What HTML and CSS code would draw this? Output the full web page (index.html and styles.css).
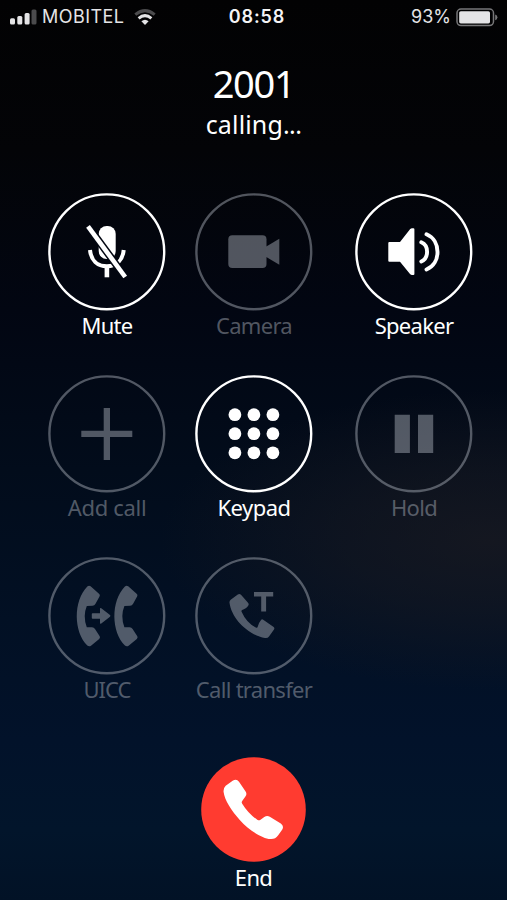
FILE: index.html
```html
<!DOCTYPE html>
<html lang="en">
<head>
<meta charset="utf-8">
<title>Call</title>
<link rel="stylesheet" href="styles.css">
</head>
<body>
<div class="phone">
  <header class="status">
    <div class="status-left">
      <svg class="signal" width="27" height="16" viewBox="0 0 27 16"><rect x="0" y="9.3" width="5" height="6.2" rx="1.5"/><rect x="7.3" y="7" width="5" height="8.5" rx="1.5"/><rect x="14.6" y="4" width="5" height="11.5" rx="1.5"/><rect class="weak" x="21.5" y="0.5" width="5" height="15" rx="1.5"/></svg>
      <span class="carrier">MOBITEL</span>
      <svg class="wifi" width="22" height="17" viewBox="0 0 22 17"><path class="weak-line" d="M1.3 5.6Q11-2.4 20.7 5.6"/><path class="line" d="M4.6 9.3Q11 4 17.4 9.3"/><path d="M7.4 12.2Q11 9.2 14.6 12.2L11 16Z"/></svg>
    </div>
    <span class="time">08:58</span>
    <div class="status-right">
      <span class="percent">93%</span>
      <svg width="42" height="19" viewBox="0 0 42 19"><rect class="shell" x="1" y="1" width="36.5" height="16.6" rx="4"/><rect x="3.2" y="3.2" width="30.8" height="12.2" rx="1.6"/><path class="tip" d="M39.2 6.5Q41.4 7 41.4 9.3T39.2 12.2Z"/></svg>
    </div>
  </header>
  <section class="caller">
    <h1 class="number">2001</h1>
    <p class="state">calling<span class="dots">...</span></p>
  </section>
  <main class="controls">
    <button class="control">
      <svg viewBox="0 0 118 118"><circle class="ring" cx="58.8" cy="58.8" r="57.4"/><rect x="50.7" y="33" width="17" height="33" rx="8"/><path class="mic-arc" d="M42 57C43 67.5 49.5 73.3 58.9 73.3S74.7 67.5 75.7 57"/><path d="M56.6 73h4.6v11.3h-4.6z"/><path class="slash-gap" d="M40.3 33.7L77 83.7"/><path class="slash" d="M40 33.3L77.2 84"/></svg>
      <span class="label mute">Mute</span>
    </button>
    <button class="control off">
      <svg viewBox="0 0 118 118"><circle class="ring" cx="58.8" cy="58.8" r="57.4"/><rect x="33.3" y="42.3" width="38.2" height="32.8" rx="4"/><path d="M71.3 53.5L84.3 45.7V71.8L71.3 64Z"/></svg>
      <span class="label camera">Camera</span>
    </button>
    <button class="control">
      <svg viewBox="0 0 118 118"><circle class="ring" cx="58.8" cy="58.8" r="57.4"/><path d="M34.3 49H45L55 36.2Q56 35.2 57 35.2H58.4Q59.4 35.2 59.4 36.3V81Q59.4 82 58.4 82H57Q56 82 55 81L45 68.8H34.3Q33.3 68.8 33.3 67.8V50Q33.3 49 34.3 49Z"/><path class="wave" d="M66.3 49.3C74 52.5 74 65 66.3 68.5M71.5 41.3C86.2 47.5 86.2 70.4 71.5 76.5"/></svg>
      <span class="label speaker">Speaker</span>
    </button>
    <button class="control off">
      <svg viewBox="0 0 118 118"><circle class="ring" cx="58.8" cy="58.8" r="57.4"/><path d="M55.7 33H62V55.7H84.3V62H62V85H55.7V62H33.3V55.7H55.7Z"/></svg>
      <span class="label add">Add call</span>
    </button>
    <button class="control">
      <svg viewBox="0 0 118 118"><circle class="ring" cx="58.8" cy="58.8" r="57.4"/><circle cx="39.9" cy="39.7" r="6.4"/><circle cx="58.9" cy="39.7" r="6.4"/><circle cx="77.9" cy="39.7" r="6.4"/><circle cx="39.9" cy="58.7" r="6.4"/><circle cx="58.9" cy="58.7" r="6.4"/><circle cx="77.9" cy="58.7" r="6.4"/><circle cx="39.9" cy="77.8" r="6.4"/><circle cx="58.9" cy="77.8" r="6.4"/><circle cx="77.9" cy="77.8" r="6.4"/></svg>
      <span class="label keypad">Keypad</span>
    </button>
    <button class="control off">
      <svg viewBox="0 0 118 118"><circle class="ring" cx="58.8" cy="58.8" r="57.4"/><path d="M39.7 39.7h15.2V78H39.7zM63 39.7h15.2V78H63z"/></svg>
      <span class="label hold">Hold</span>
    </button>
    <button class="control off">
      <svg viewBox="0 0 118 118"><circle class="ring" cx="58.8" cy="58.8" r="57.4"/><path id="receiver" d="M39.3 29.5Q41 28.2 42.6 29.3L51 36.8Q52.5 38 51.5 39.5L47.5 46.8Q46.5 48.6 44.5 48.7L38.8 49Q34.6 59 38.8 70.3L44 70.2Q46 70.2 47 72L51.7 79.3Q52.5 80.7 51.2 81.9L43 88.8Q41 90 39.3 88.5C25.6 75 25 44 39.3 29.5Z"/><use href="#receiver" x="37.6"/><path d="M44.6 56.3H52V51.8Q52 50.3 53.3 51.3L62 58Q62.9 58.9 62 59.7L53.3 66.4Q52 67.4 52 66V61.7H44.6Q43.8 61.7 43.8 60.9V57.1Q43.8 56.3 44.6 56.3Z"/></svg>
      <span class="label uicc">UICC</span>
    </button>
    <button class="control off">
      <svg viewBox="0 0 118 118"><circle class="ring" cx="58.8" cy="58.8" r="57.4"/><path d="M59 35H78.2V39.4H71.1V54.4H66.2V39.4H59Z"/><path d="M36 42.4L42.8 37.5Q44.5 36.2 46 37.8L53 45.7Q54.2 47 53.3 48.6Q52 51.3 47.2 53.1Q46 53.6 46.6 54.8Q51.5 66 60.8 70.5Q62.4 71.3 62.8 69.5Q63.4 66.3 66.2 62.8Q67 61.9 68.2 62.7L78.3 69.8Q80 71 79 72.5L74 79.5Q72.6 81.5 70 81C53 77.8 36.7 62 34.5 45.8Q34.2 43.7 36 42.4Z"/></svg>
      <span class="label transfer">Call transfer</span>
    </button>
  </main>
  <footer class="hangup">
    <svg class="hangup-icon" viewBox="0 0 105 105"><circle class="red" cx="52.5" cy="52.5" r="52.3"/><path d="M24.7 28.7L32 23.6Q35.6 21.4 38 24.8L44.6 34.6Q46.3 37.3 44.4 39.6L41.2 43.9Q40.2 45.3 41.2 46.8Q47.5 57 56.6 63Q58 63.8 59.5 62.8L63.3 60Q66 58.2 68.8 59.7L79.8 66.5Q83.2 69 81.3 72.4L77 78.6Q74.3 82.4 69.5 82.1C61 81.8 47.5 72.7 39 63.2C30.5 53.7 23.5 43 22.6 35Q22.2 31 24.7 28.7Z"/></svg>
    <span class="label end">End</span>
  </footer>
</div>
</body>
</html>
```
FILE: styles.css
```css
* { box-sizing: border-box; }
body {
  margin: 0;
  background: #000;
  color: #fff;
  font-family: "Noto Sans", "Open Sans", sans-serif;
}
.phone {
  width: 507px;
  height: 900px;
  overflow: hidden;
  display: flex;
  flex-direction: column;
  background:
    radial-gradient(ellipse 330px 150px at 490px 540px, rgba(28, 27, 33, .7), rgba(28, 27, 33, .45) 45%, rgba(28, 27, 33, 0)),
    linear-gradient(#020203 0, #030407 150px, #020612 310px, #020c1b 470px, #021024 620px, #02122a 740px, #02152b 830px, #021226 900px);
}
svg { display: block; fill: currentColor; }
.status {
  height: 34px;
  padding: 0 9px 0 10px;
  display: grid;
  grid-template-columns: 1fr auto 1fr;
  align-items: center;
  font-family: Inter, "Liberation Sans", sans-serif;
  font-size: 18px;
  line-height: 34px;
  color: #e4e4e6;
}
.status-left, .status-right { display: flex; align-items: center; }
.status-right { justify-content: flex-end; gap: 5px; }
.carrier { margin-left: 5px; letter-spacing: .45px; }
.wifi { margin-left: 10px; }
.weak { fill: #4b4b4d; }
.line, .weak-line { fill: none; stroke: currentColor; stroke-width: 3; }
.weak-line { stroke: #4b4b4d; }
.time { position: relative; left: 3px; font-weight: 600; letter-spacing: .9px; color: #f4f4f5; }
.shell { fill: none; stroke: #777779; stroke-width: 1.5; }
.tip { fill: #777779; }
.caller {
  height: 159px;
  padding-top: 23px;
  text-align: center;
}
.number {
  margin: 0;
  font-size: 38px;
  line-height: 52px;
  font-weight: 400;
  letter-spacing: -1.3px;
}
.state {
  margin: 0;
  font-size: 25px;
  line-height: 30px;
  letter-spacing: .15px;
}
.dots { letter-spacing: -.6px; }
.controls {
  display: grid;
  grid-template-columns: 118px 118px 118px;
  grid-auto-rows: 182px;
  column-gap: 29px;
  padding-left: 48px;
}
.control {
  display: flex;
  flex-direction: column;
  align-items: center;
  border: 0;
  padding: 0;
  background: none;
  color: #fff;
  font: inherit;
}
.control:nth-child(3n) { margin: 0 -13px 0 13px; }
.control svg { width: 118px; height: 118px; flex: none; }
.control .label { margin-top: -1px; }
.off { color: rgba(160, 166, 176, .5); }
.ring { fill: none; stroke: currentColor; stroke-width: 2.4; }
.mic-arc, .slash, .slash-gap, .wave { fill: none; stroke: currentColor; stroke-width: 4; }
.slash { stroke-width: 4.6; }
.slash-gap { stroke: #020611; stroke-width: 7.6; }
.wave { stroke-linecap: round; stroke-width: 3.9; }
.label {
  font-size: 22px;
  line-height: 30px;
  white-space: nowrap;
  letter-spacing: -.7px;
}
.add { letter-spacing: -.3px; }
.keypad { letter-spacing: -.5px; }
.uicc { letter-spacing: -1px; }
.hangup {
  margin-top: 18px;
  display: flex;
  flex-direction: column;
  align-items: center;
}
.hangup-icon { width: 105px; height: 105px; }
.red { fill: #ff3b30; }
```
